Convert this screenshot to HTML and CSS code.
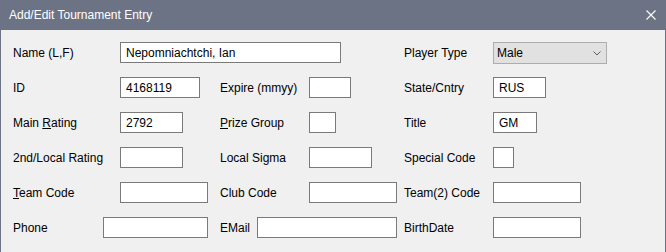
FILE: index.html
```html
<!DOCTYPE html>
<html lang="en">
<head>
    <meta charset="UTF-8">
    <meta name="viewport" content="width=device-width, initial-scale=1.0">
    <title>Add/Edit Tournament Entry</title>
    <link rel="stylesheet" href="styles.css">
</head>
<body>
    <div class="window">
        <section class="titlebar">
            <span class="title">Add/Edit Tournament Entry</span>
            <button class="close" title="Close">
                <svg width="10" height="10" viewBox="0 0 10 10">
                    <path d="M0.5 0.5 L9.5 9.5 M9.5 0.5 L0.5 9.5" stroke="#fff" stroke-width="1.1" fill="none"/>
                </svg>
            </button>
        </section>

        <form class="entry">
            <!-- Row 1 -->
            <div class="field wide">
                <label class="lbl col1">Name (L,F)</label>
                <input type="text" class="w-name" value="Nepomniachtchi, Ian">
            </div>
            <div class="field">
                <label class="lbl col3">Player Type</label>
                <div class="select">
                    <span>Male</span>
                    <svg width="8" height="5" viewBox="0 0 8 5">
                        <path d="M0.5 0.5 L4 4 L7.5 0.5" stroke="#606060" stroke-width="1" fill="none"/>
                    </svg>
                </div>
            </div>

            <!-- Row 2 -->
            <div class="field">
                <label class="lbl col1">ID</label>
                <input type="text" class="w-id" value="4168119">
            </div>
            <div class="field">
                <label class="lbl col2">Expire (mmyy)</label>
                <input type="text" class="w-expire">
            </div>
            <div class="field">
                <label class="lbl col3">State/Cntry</label>
                <input type="text" class="w-state" value="RUS">
            </div>

            <!-- Row 3 -->
            <div class="field">
                <label class="lbl col1">Main <u>R</u>ating</label>
                <input type="text" class="w-rating" value="2792">
            </div>
            <div class="field">
                <label class="lbl col2"><u>P</u>rize Group</label>
                <input type="text" class="w-prize">
            </div>
            <div class="field">
                <label class="lbl col3">Title</label>
                <input type="text" class="w-title" value="GM">
            </div>

            <!-- Row 4 -->
            <div class="field">
                <label class="lbl col1">2nd/Local Rating</label>
                <input type="text" class="w-rating">
            </div>
            <div class="field">
                <label class="lbl col2">Local Sigma</label>
                <input type="text" class="w-rating">
            </div>
            <div class="field">
                <label class="lbl col3">Special Code</label>
                <input type="text" class="w-special">
            </div>

            <!-- Row 5 -->
            <div class="field">
                <label class="lbl col1"><u>T</u>eam Code</label>
                <input type="text" class="w-code">
            </div>
            <div class="field">
                <label class="lbl col2">Club Code</label>
                <input type="text" class="w-code">
            </div>
            <div class="field">
                <label class="lbl col3">Team(2) Code</label>
                <input type="text" class="w-code">
            </div>

            <!-- Row 6 -->
            <div class="field">
                <label class="lbl phone">Phone</label>
                <input type="text" class="w-phone">
            </div>
            <div class="field">
                <label class="lbl email">EMail</label>
                <input type="text" class="w-email">
            </div>
            <div class="field">
                <label class="lbl col3">BirthDate</label>
                <input type="text" class="w-code">
            </div>
        </form>
    </div>
</body>
</html>
```

FILE: styles.css
```css
* {
    margin: 0;
    padding: 0;
    box-sizing: border-box;
}

body {
    background-color: #f0f0f0;
    font-family: 'Liberation Sans', Arial, sans-serif;
    font-size: 12px;
    color: #000;
    width: 666px;
    height: 252px;
    overflow: hidden;
}

.window {
    height: 252px;
    border-left: 1px solid #6b7385;
    border-right: 1px solid #6b7385;
    background-color: #f0f0f0;
}

.titlebar {
    height: 30px;
    margin: 0 -1px;
    padding: 0 10px 0 9px;
    background-color: #6b7385;
    display: flex;
    align-items: center;
    justify-content: space-between;

    .title {
        color: #fff;
        font-size: 12px;
    }

    .close {
        width: 10px;
        height: 10px;
        border: none;
        background: none;
        display: flex;
        cursor: pointer;
    }
}

.entry {
    padding: 12px 0 0 12px;
    display: grid;
    grid-template-columns: 207px 184px 1fr;
    grid-auto-rows: 21px;
    row-gap: 14px;

    .field {
        display: flex;
        align-items: center;
        height: 21px;

        &.wide {
            grid-column: span 2;
        }
    }

    .lbl {
        flex-shrink: 0;
        line-height: 14px;

        &.col1 { width: 107px; }
        &.col2 { width: 89px; }
        &.col3 { width: 89px; }
        &.phone { width: 90px; }
        &.email { width: 37px; }
    }

    input {
        height: 21px;
        padding: 0 5px;
        border: 1px solid #7a7a7a;
        background-color: #fff;
        font-family: inherit;
        font-size: 12px;
        color: #000;
        outline: none;
    }
}

.select {
    width: 114px;
    height: 22px;
    margin-top: 1px;
    padding: 0 5px 0 3px;
    border: 1px solid #adadad;
    background-color: #e1e1e1;
    display: flex;
    align-items: center;
    justify-content: space-between;
}

.w-name { width: 221px; }
.w-id { width: 80px; }
.w-expire { width: 42px; }
.w-state { width: 53px; }
.w-rating { width: 63px; }
.w-prize { width: 27px; }
.w-title { width: 44px; }
.w-special { width: 21px; }
.w-code { width: 88px; }
.w-phone { width: 105px; }
.w-email { width: 140px; }
```
